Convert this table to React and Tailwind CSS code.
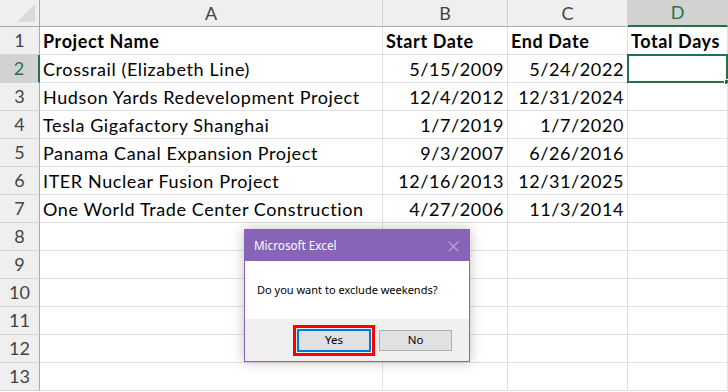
import React from 'react';

const projects = [
  ['Crossrail (Elizabeth Line)', '5/15/2009', '5/24/2022'],
  ['Hudson Yards Redevelopment Project', '12/4/2012', '12/31/2024'],
  ['Tesla Gigafactory Shanghai', '1/7/2019', '1/7/2020'],
  ['Panama Canal Expansion Project', '9/3/2007', '6/26/2016'],
  ['ITER Nuclear Fusion Project', '12/16/2013', '12/31/2025'],
  ['One World Trade Center Construction', '4/27/2006', '11/3/2014'],
];

const cellFont = { fontFamily: 'Lato, "Liberation Sans", sans-serif' };
const uiFont = { fontFamily: '"Noto Sans", "Open Sans", sans-serif' };

function ColHeader({ label, active }) {
  return (
    <div
      className={`h-[27px] flex items-center justify-center text-[18px] border-r border-[#d4d4d4] ${
        active ? 'bg-[#d2d2d2] text-[#217346] border-b-2 border-b-[#217346]' : 'bg-[#efefef] text-[#444] border-b border-b-[#ababab]'
      }`}
    >
      {label}
    </div>
  );
}

function RowHeader({ n, active }) {
  return (
    <div
      className={`h-[28px] flex items-center justify-center text-[18px] border-b border-[#d4d4d4] ${
        active ? 'bg-[#d2d2d2] text-[#217346] border-r-2 border-r-[#217346]' : 'bg-[#efefef] text-[#444] border-r border-r-[#ababab]'
      }`}
    >
      {n}
    </div>
  );
}

function Cell({ children, right, bold, selected }) {
  return (
    <div
      className={`relative h-[28px] flex items-center px-[3px] pt-[1px] text-[18px] tracking-[0.6px] text-black border-r border-b border-[#e1e1e1] whitespace-nowrap ${
        right ? 'justify-end' : ''
      } ${bold ? 'font-bold' : ''}`}
    >
      {children}
      {selected && (
        <>
          <div className="absolute -left-[1px] -top-[1px] -right-[1px] -bottom-[1px] border-2 border-[#217346]" />
          <div className="absolute -right-[3px] -bottom-[3px] w-[6px] h-[6px] bg-[#217346] border border-white" />
        </>
      )}
    </div>
  );
}

function Dialog() {
  return (
    <div
      className="absolute left-[244px] top-[229px] w-[226px] border border-[#8764b8] bg-white shadow-[0_0_12px_rgba(0,0,0,0.25)]"
      style={uiFont}
    >
      <div className="h-[31px] bg-[#8764b8] flex items-center justify-between pl-[9px] pr-[10px]">
        <span className="text-white text-[11.7px]">Microsoft Excel</span>
        <svg width="11" height="11" viewBox="0 0 11 11" className="mt-[1px]">
          <path d="M0.5 0.5 L10.5 10.5 M10.5 0.5 L0.5 10.5" stroke="#b7a2d6" strokeWidth="1.2" />
        </svg>
      </div>
      <div className="h-[58px] flex items-center pl-[12px] text-[11px] text-black">
        Do you want to exclude weekends?
      </div>
      <div className="h-[42px] bg-[#f0f0f0] flex items-center pl-[48px] gap-[4px]">
        <div className="border-[3px] border-[#ff0000] p-[1px]">
          <button className="w-[74px] h-[23px] bg-[#e1e1e1] border-2 border-[#0078d7] text-[11.5px] text-black flex items-center justify-center">
            Yes
          </button>
        </div>
        <button className="w-[73px] h-[21px] bg-[#e1e1e1] border border-[#adadad] text-[11.5px] text-black flex items-center justify-center">
          No
        </button>
      </div>
    </div>
  );
}

export default function App() {
  const rows = [];
  rows.push(['Project Name', 'Start Date', 'End Date', 'Total Days', true]);
  projects.forEach((p) => rows.push([p[0], p[1], p[2], '', false]));
  for (let i = 0; i < 6; i++) rows.push(['', '', '', '', false]);

  return (
    <div className="relative w-[728px] h-[392px] overflow-hidden bg-white" style={cellFont}>
      <div className="grid grid-cols-[40px_343px_125px_120px_100px]">
        {/* corner */}
        <div className="relative h-[27px] bg-[#efefef] border-r border-b border-[#ababab]">
          <div className="absolute right-[4px] bottom-[4px] w-0 h-0 border-l-[18px] border-l-transparent border-b-[18px] border-b-[#dadada]" />
        </div>
        <ColHeader label="A" />
        <ColHeader label="B" />
        <ColHeader label="C" />
        <ColHeader label="D" active />

        {rows.map((r, i) => (
          <React.Fragment key={i}>
            <RowHeader n={i + 1} active={i === 1} />
            <Cell bold={r[4]}>{r[0]}</Cell>
            <Cell bold={r[4]} right={!r[4]}>{r[1]}</Cell>
            <Cell bold={r[4]} right={!r[4]}>{r[2]}</Cell>
            <Cell bold={r[4]} selected={i === 1}>{r[3]}</Cell>
          </React.Fragment>
        ))}
      </div>
      <Dialog />
    </div>
  );
}
